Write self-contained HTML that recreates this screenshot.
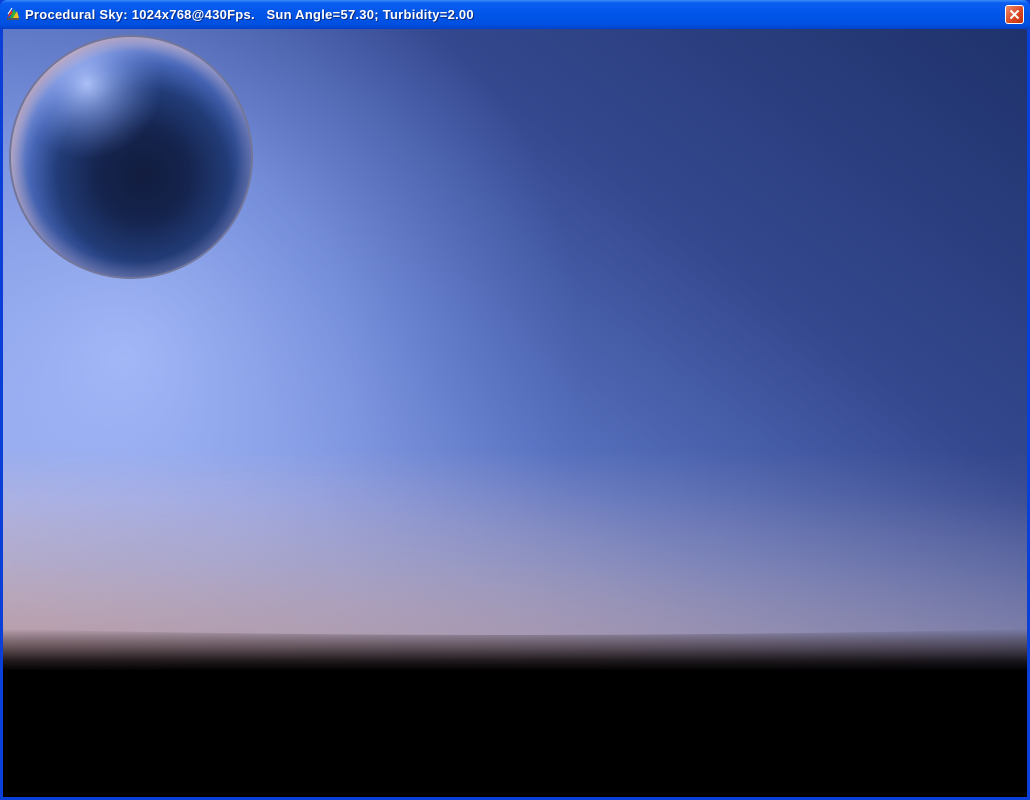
<!DOCTYPE html>
<html><head><meta charset="utf-8"><style>
html,body{margin:0;padding:0;width:1030px;height:800px;overflow:hidden;background:#0a3fd8}
.title{position:absolute;left:0;top:0;width:1030px;height:29px;border-radius:7px 7px 0 0;
background:linear-gradient(#3a8cf8 0%,#0a5ef0 10%,#0055e8 50%,#0050e0 85%,#0040c8 100%)}
.tt{position:absolute;left:25px;top:7px;color:#fff;font:bold 13px "Liberation Sans",sans-serif;white-space:pre;text-shadow:1px 1px 0 #0a2a80;letter-spacing:0.26px}
.x{position:absolute;left:1005px;top:5px;width:19px;height:19px;border:1px solid #fff;border-radius:3px;box-sizing:border-box;background:linear-gradient(135deg,#f08a6a,#d8451e 60%,#c03010)}
.content{position:absolute;left:3px;top:29px;width:1024px;height:768px;overflow:hidden;background:#000}
</style></head><body>
<div class="title">
<svg style="position:absolute;left:6px;top:7px" width="14" height="14" viewBox="0 0 14 14">
<rect x="1" y="11" width="12" height="2" fill="#555"/>
<path d="M1 11 L5 3 L7 6 Z" fill="#e83020"/><path d="M4 11 L8 2 L10 6 L7 11Z" fill="#30b040"/><path d="M7 11 L11 4 L13 11Z" fill="#f0c020"/><path d="M2 7 L6 1" stroke="#fff" stroke-width="1"/>
</svg>
<div class="tt">Procedural Sky: 1024x768@430Fps.   Sun Angle=57.30; Turbidity=2.00</div>
<div class="x"><svg width="17" height="17" viewBox="0 0 17 17"><path d="M4.5 4.5 L12.5 12.5 M12.5 4.5 L4.5 12.5" stroke="#fff" stroke-width="2"/></svg></div>
</div>
<div class="content">
<svg width="1024" height="768" viewBox="0 0 1024 768">
<defs>
<linearGradient id="base" x1="1" y1="0" x2="0.15" y2="0.85">
<stop offset="0" stop-color="#1f326c"/>
<stop offset="0.35" stop-color="#34488f"/>
<stop offset="0.6" stop-color="#5872c0"/>
<stop offset="0.85" stop-color="#95a8e8"/>
<stop offset="1" stop-color="#b0bff0"/>
</linearGradient>
<radialGradient id="glow" cx="120" cy="330" r="460" gradientUnits="userSpaceOnUse">
<stop offset="0" stop-color="#a4b9f8" stop-opacity="0.95"/>
<stop offset="0.5" stop-color="#8ea6f0" stop-opacity="0.55"/>
<stop offset="1" stop-color="#6b84d8" stop-opacity="0"/>
</radialGradient>
<linearGradient id="hz" x1="0" y1="0" x2="0" y2="1">
<stop offset="0" stop-color="#e8b8b0" stop-opacity="0"/>
<stop offset="0.5" stop-color="#e6bcb8" stop-opacity="0.5"/>
<stop offset="0.85" stop-color="#f0b8ac" stop-opacity="1"/>
<stop offset="1" stop-color="#f0b8ac" stop-opacity="1"/>
</linearGradient>
<linearGradient id="hzx" x1="0" y1="0" x2="1" y2="0">
<stop offset="0" stop-color="#fff" stop-opacity="1"/>
<stop offset="0.5" stop-color="#fff" stop-opacity="0.65"/>
<stop offset="1" stop-color="#fff" stop-opacity="0.25"/>
</linearGradient>
<mask id="hm"><rect width="1024" height="768" fill="url(#hzx)"/></mask>
<linearGradient id="hzr" x1="0" y1="0" x2="0" y2="1">
<stop offset="0" stop-color="#8088b0" stop-opacity="0"/>
<stop offset="0.8" stop-color="#8a88a8" stop-opacity="0.9"/>
<stop offset="1" stop-color="#8a88a8" stop-opacity="0.9"/>
</linearGradient>
<linearGradient id="dark" x1="0" y1="0" x2="0" y2="1">
<stop offset="0" stop-color="#000" stop-opacity="0"/>
<stop offset="0.35" stop-color="#201414" stop-opacity="0.45"/>
<stop offset="0.75" stop-color="#080404" stop-opacity="0.85"/>
<stop offset="1" stop-color="#000" stop-opacity="1"/>
</linearGradient>
<radialGradient id="sph" cx="140" cy="146" r="132" gradientUnits="userSpaceOnUse">
<stop offset="0" stop-color="#111c3e"/>
<stop offset="0.35" stop-color="#15244e"/>
<stop offset="0.65" stop-color="#223c78"/>
<stop offset="0.85" stop-color="#4564b4"/>
<stop offset="1" stop-color="#7c94dc"/>
</radialGradient>
<radialGradient id="hl" cx="84" cy="55" r="75" gradientUnits="userSpaceOnUse">
<stop offset="0" stop-color="#b8cbff" stop-opacity="0.9"/>
<stop offset="0.5" stop-color="#8aa4ee" stop-opacity="0.45"/>
<stop offset="1" stop-color="#6080d0" stop-opacity="0"/>
</radialGradient>
<radialGradient id="rim" cx="128" cy="128" r="122" gradientUnits="userSpaceOnUse">
<stop offset="0.86" stop-color="#e0b0a8" stop-opacity="0"/>
<stop offset="1" stop-color="#e8b4a8" stop-opacity="0.8"/>
</radialGradient>
<linearGradient id="rimfade" x1="0" y1="0" x2="1" y2="1">
<stop offset="0" stop-color="#fff"/>
<stop offset="0.5" stop-color="#fff" stop-opacity="0.4"/>
<stop offset="1" stop-color="#fff" stop-opacity="0.1"/>
</linearGradient>
<mask id="rm"><rect x="0" y="0" width="256" height="256" fill="url(#rimfade)"/></mask>
<clipPath id="c"><circle cx="128" cy="128" r="121"/></clipPath>
</defs>
<rect width="1024" height="768" fill="url(#base)"/>
<rect width="1024" height="768" fill="url(#glow)"/>
<rect y="420" width="1024" height="225" fill="url(#hz)" mask="url(#hm)"/>
<rect y="470" width="1024" height="175" fill="url(#hzr)" opacity="0.6"/>
<path d="M0 600 Q500 612 1024 600 L1024 642 L0 642 Z" fill="url(#dark)"/>
<rect y="641" width="1024" height="127" fill="#000"/>
<g clip-path="url(#c)">
<circle cx="128" cy="128" r="122" fill="url(#sph)"/>
<circle cx="128" cy="128" r="122" fill="url(#hl)"/>
<circle cx="128" cy="128" r="122" fill="url(#rim)" mask="url(#rm)"/>
</g>
<circle cx="128" cy="128" r="121" fill="none" stroke="#72769a" stroke-width="2"/>
</svg>
</div>
</body></html>
